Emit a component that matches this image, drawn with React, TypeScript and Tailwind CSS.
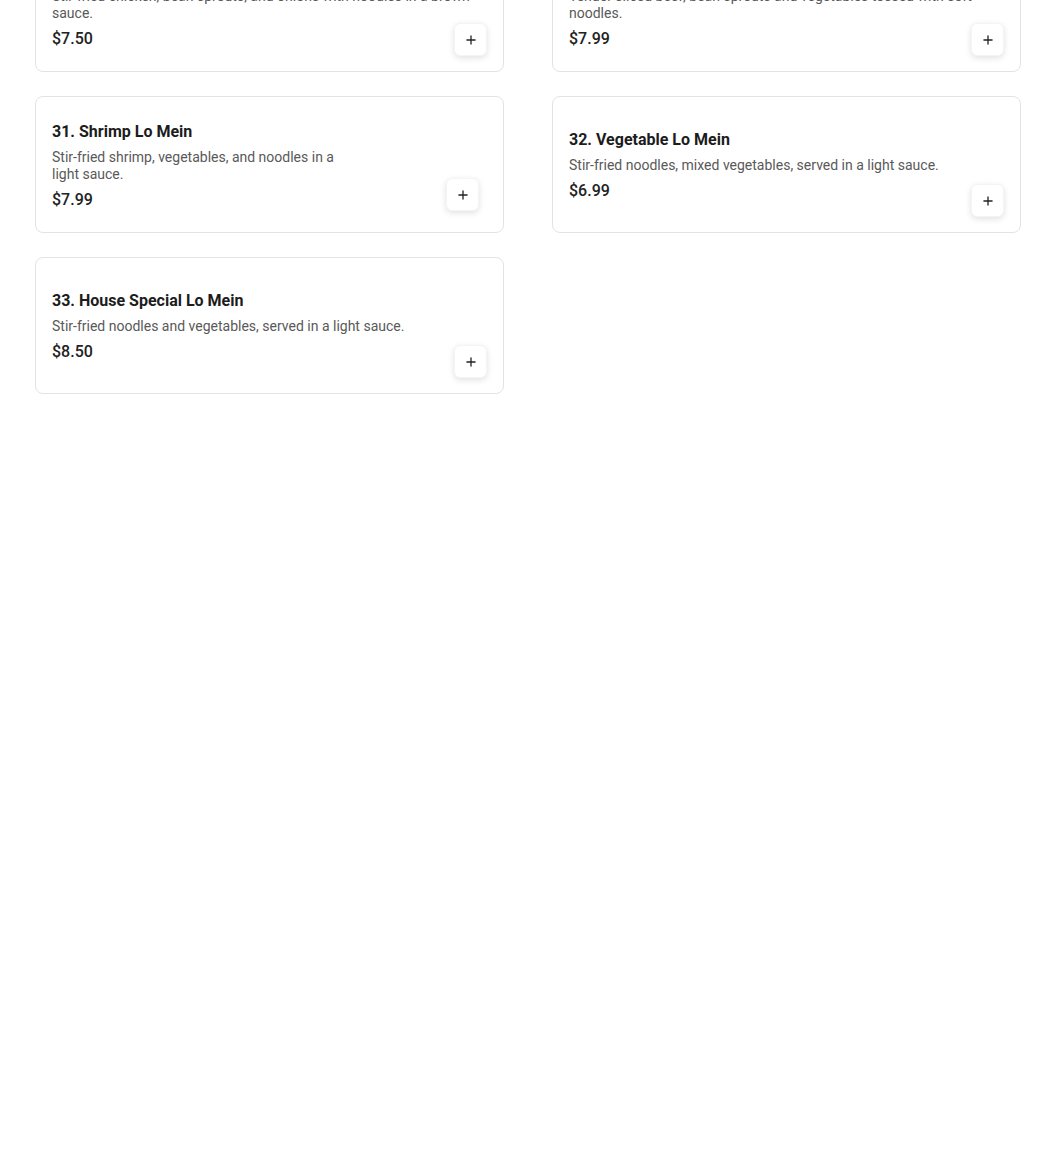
import { Plus } from 'lucide-react';

interface MenuItem {
  id: number;
  name: string;
  description: string;
  price: string;
  hasImage?: boolean;
}

const items: MenuItem[] = [
  {
    id: 29,
    name: 'Chicken Lo Mein',
    description: 'Stir-fried chicken, bean sprouts, and onions with noodles in a brown sauce.',
    price: '$7.50',
  },
  {
    id: 30,
    name: 'Beef Lo Mein',
    description: 'Tender sliced beef, bean sprouts and vegetables tossed with soft noodles.',
    price: '$7.99',
  },
  {
    id: 31,
    name: 'Shrimp Lo Mein',
    description: 'Stir-fried shrimp, vegetables, and noodles in a light sauce.',
    price: '$7.99',
    hasImage: true,
  },
  {
    id: 32,
    name: 'Vegetable Lo Mein',
    description: 'Stir-fried noodles, mixed vegetables, served in a light sauce.',
    price: '$6.99',
  },
  {
    id: 33,
    name: 'House Special Lo Mein',
    description: 'Stir-fried noodles and vegetables, served in a light sauce.',
    price: '$8.50',
  },
];

function AddButton({ className }: { className: string }) {
  return (
    <button
      className={`absolute flex h-[33px] w-[33px] items-center justify-center rounded-md border border-gray-100 bg-white text-[#222] shadow-[0_2px_6px_rgba(0,0,0,0.12)] ${className}`}
    >
      <Plus size={14} strokeWidth={2.25} />
    </button>
  );
}

function MenuCard({ item }: { item: MenuItem }) {
  return (
    <div className="relative flex h-[137px] gap-4 rounded-lg border border-[#e3e3e3] bg-white px-4 pb-[15px] pt-[17px]">
      <div className="flex min-w-0 flex-1 flex-col justify-center">
        <h3 className="text-base font-bold leading-6 text-[#1c1c1c]">
          {item.id}. {item.name}
        </h3>
        <p className="mt-[5px] text-sm leading-[17px] text-[#595959]">{item.description}</p>
        <p className="mt-[5px] text-base font-medium leading-6 text-[#222]">{item.price}</p>
      </div>
      {item.hasImage ? (
        <div className="relative w-[120px] shrink-0">
          <AddButton className="bottom-[6px] right-2" />
        </div>
      ) : (
        <AddButton className="bottom-[15px] right-4" />
      )}
    </div>
  );
}

export default function App() {
  return (
    <div className="h-screen overflow-hidden bg-white font-['Roboto','Liberation_Sans',sans-serif]">
      <div className="-mt-[65px] pl-[35px] pr-[29px]">
        <div className="grid grid-cols-2 gap-x-12 gap-y-6">
          {items.map((item) => (
            <MenuCard key={item.id} item={item} />
          ))}
        </div>
      </div>
    </div>
  );
}
